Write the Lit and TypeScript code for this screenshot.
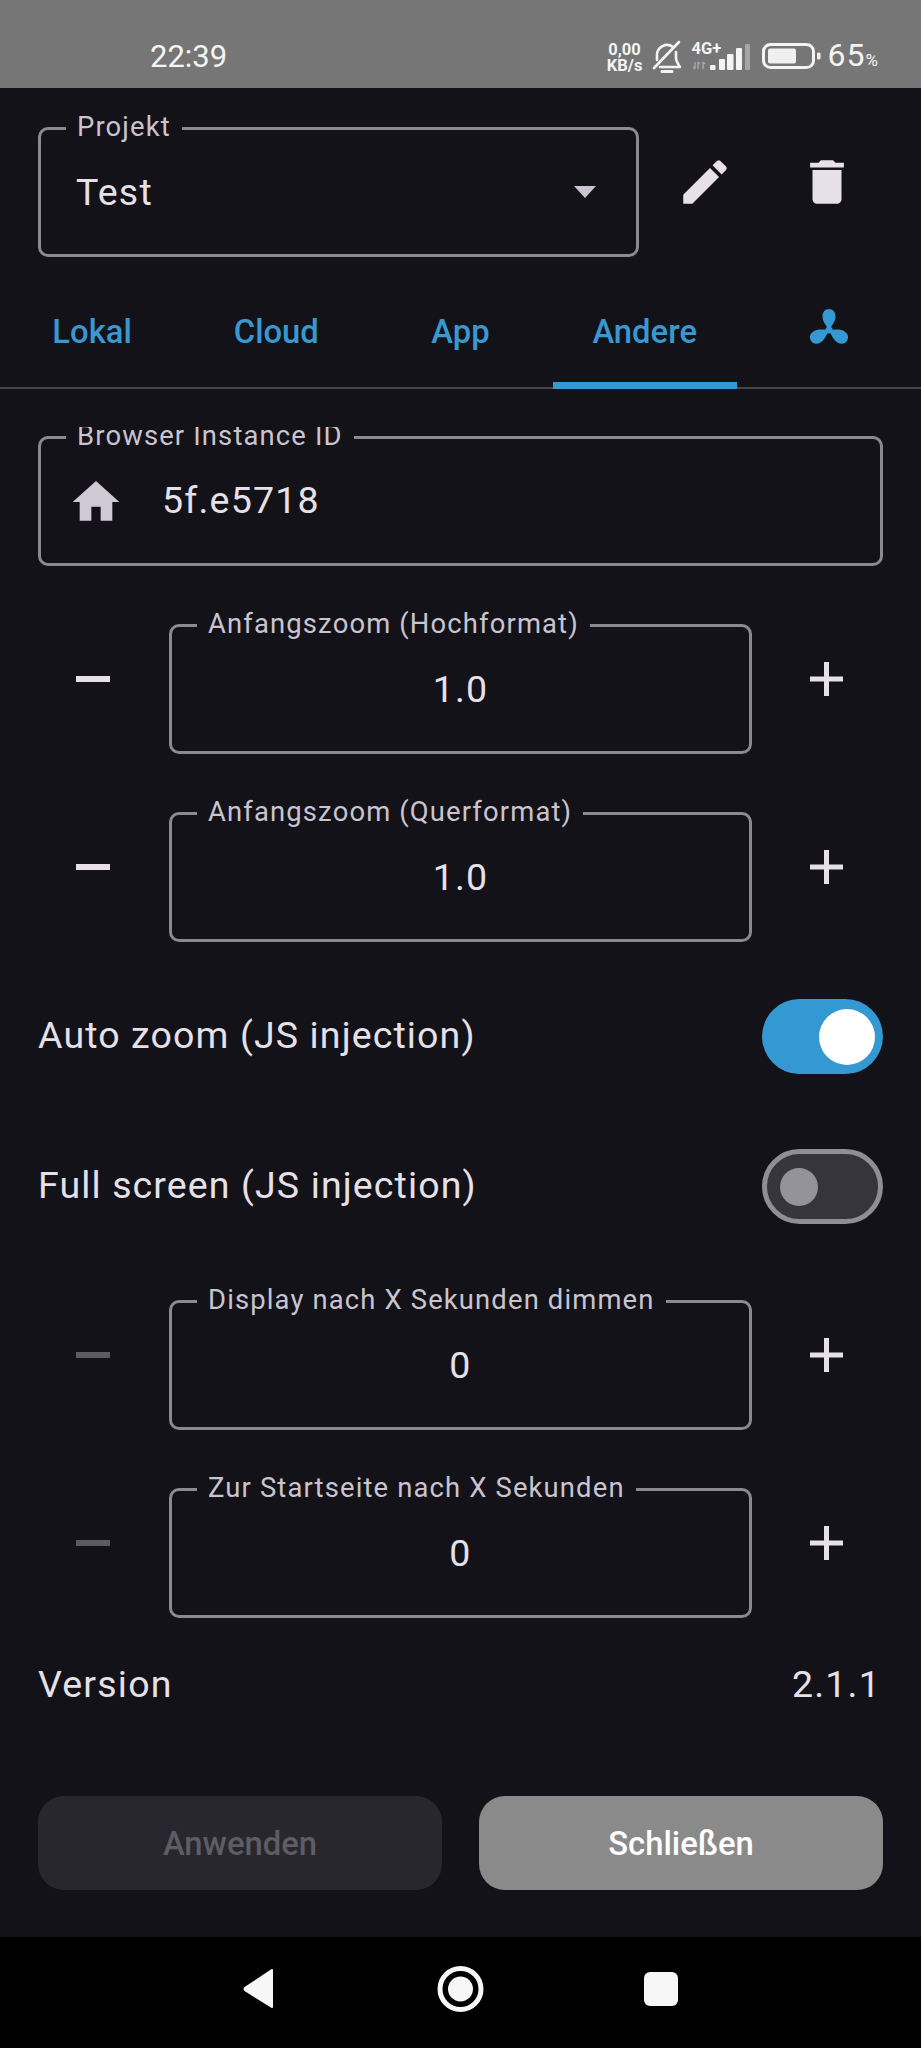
import { LitElement, html, css, svg } from "lit";
import { customElement } from "lit/decorators.js";

const ICON = {
  edit: svg`<path d="M3 17.25V21h3.75L17.81 9.94l-3.75-3.75L3 17.25zM20.71 7.04c.39-.39.39-1.02 0-1.41l-2.34-2.34c-.39-.39-1.02-.39-1.41 0l-1.83 1.83 3.75 3.75 1.83-1.83z"/>`,
  del: svg`<path d="M6 19c0 1.1.9 2 2 2h8c1.1 0 2-.9 2-2V7H6v12zM19 4h-3.5l-1-1h-5l-1 1H5v2h14V4z"/>`,
  home: svg`<path d="M10 20v-6h4v6h5v-8h3L12 3 2 12h3v8z"/>`,
};

const LOBE = "M21 22C19 17 14.5 13 14.5 7.5 14.5 3 17 0 21 0s6.500 3 6.500 7.500C27.500 13 23 17 21 22z";

@customElement("app-root")
export class AppRoot extends LitElement {
  static styles = css`
    :host { display: block; width: 921px; height: 2048px; font-family: Roboto, "Noto Sans", sans-serif; color: #e6e1e9; background: #131218; }
    * { box-sizing: border-box; }
    .page { display: flex; flex-direction: column; height: 2048px; overflow: hidden; }

    .status { height: 88px; flex: none; background: #767676; color: #f4f4f4; display: flex; align-items: center; padding: 26px 43px 0 150px; }
    .time { font-size: 31px; line-height: 36px; margin-top: -1px; }
    .sys { margin-left: auto; display: flex; align-items: center; }
    .speed { font-size: 16.5px; font-weight: 700; line-height: 16px; text-align: center; width: 36px; margin-top: 1px; }
    .bell { margin-left: 9px; display: block; }
    .net { position: relative; width: 60px; height: 30px; margin-left: 10px; }
    .net span { position: absolute; left: 0; top: -1px; font-size: 16.5px; font-weight: 700; line-height: 16px; }
    .net svg { position: absolute; left: 0; top: 0; }
    .batt { display: block; margin-left: 10px; margin-top: -3px; }
    .pct { font-size: 32px; line-height: 36px; margin-left: 6px; letter-spacing: 1px; }
    .pct small { font-size: 17px; letter-spacing: 0; }

    .main { flex: 1; min-height: 0; display: flex; flex-direction: column; }
    .top { display: flex; align-items: flex-start; padding: 39px 38px 0; flex: none; }
    .top .field { width: 601px; }
    .acts { display: flex; margin-left: 37px; }
    .acts svg { width: 58px; height: 58px; fill: #e6e1e9; display: block; margin-top: 26px; }
    .acts svg + svg { margin-left: 64px; }

    .field { position: relative; height: 130px; border: 3px solid #8b8a8f; border-radius: 10px; display: flex; align-items: center; }
    .lbl { position: absolute; left: 25px; top: -18px; padding: 0 11px; background: #131218; color: #cac4d0; font-size: 27.4px; line-height: 30px; letter-spacing: 1.15px; white-space: nowrap; }
    .val { font-size: 37.5px; letter-spacing: 1.2px; line-height: 48px; color: #e6e1e9; }
    .sel { padding: 0 40px 0 35px; justify-content: space-between; }
    .sel .val { margin-top: -1px; }
    .caret { width: 22px; height: 12px; fill: #cac4d0; display: block; }

    .tabs { display: grid; grid-template-columns: repeat(5, 1fr); height: 132px; flex: none; position: relative; border-bottom: 2px solid #46454b; }
    .tab { position: relative; display: flex; align-items: center; justify-content: center; color: #3998d0; font-size: 32.8px; font-weight: 500; padding-top: 19px; }
    .tab.on::after { content: ""; position: absolute; left: 0; right: 0; bottom: -2px; height: 7px; background: #3499d2; }
    .fan { width: 42px; height: 37px; fill: #3499d2; display: block; margin-top: -8px; }

    .scroll { flex: 1; min-height: 0; margin-top: 38px; padding: 9px 38px 0; overflow: hidden; display: flex; flex-direction: column; }
    .id { padding-left: 27px; flex: none; }
    .id svg { width: 56px; height: 56px; fill: #cfc9d6; display: block; margin-right: 38px; margin-top: 1px; }
    .id .val { position: relative; top: -1px; letter-spacing: 1.2px; }

    .num { display: flex; flex: none; margin-top: 58px; }
    .num .field { flex: 1; justify-content: center; }
    .step { width: 131px; flex: none; padding-top: 27px; height: 110px; display: flex; justify-content: center; }
    .step svg { width: 36px; height: 56px; display: block; stroke: #e6e1e9; stroke-width: 5px; }
    .step:first-child svg { stroke-width: 6px; }
    .step:first-child { justify-content: flex-start; padding-left: 38px; }
    .step:last-child { justify-content: flex-end; padding-right: 38px; }
    .step.off svg { stroke: #5c5b61; }

    .sw { display: flex; align-items: center; justify-content: space-between; height: 75px; flex: none; font-size: 37.5px; letter-spacing: 1.12px; margin-top: 57px; }
    .sw span { margin-top: -4px; }
    .sw + .sw { margin-top: 75px; }
    .sw + .num { margin-top: 76px; }
    .track { width: 121px; height: 75px; border-radius: 38px; display: flex; align-items: center; flex: none; }
    .track.on { background: #3499d2; justify-content: flex-end; padding-right: 8px; }
    .track.on i { width: 56px; height: 56px; border-radius: 50%; background: #fff; display: block; }
    .track.off { background: #36353b; border: 5px solid #8f8e93; padding-left: 13px; }
    .track.off i { width: 38px; height: 38px; border-radius: 50%; background: #95939a; display: block; }

    .ver { display: flex; justify-content: space-between; align-items: center; height: 50px; flex: none; margin-top: 41px; font-size: 37.5px; letter-spacing: 1.2px; padding-right: 2px; }

    .foot { flex: none; display: grid; grid-template-columns: 1fr 1fr; gap: 37px; padding: 0 38px 47px; }
    .btn { height: 94px; border-radius: 26px; display: flex; align-items: center; justify-content: center; font-size: 32.8px; font-weight: 500; padding-top: 2px; }
    .btn.dis { background: #28272d; color: #5e5c64; }
    .btn.go { background: #8a8a8a; color: #fff; }

    .nav { height: 111px; flex: none; background: #000; display: flex; justify-content: center; }
    .nav svg { display: block; width: 921px; height: 111px; }
  `;

  private field(label: string, value: unknown, cls = "") {
    return html`<div class="field ${cls}"><span class="lbl">${label}</span>${value}</div>`;
  }

  private num(label: string, value: string, off = false) {
    return html`<div class="num">
      <div class="step ${off ? "off" : ""}"><svg viewBox="0 0 36 56"><path d="M0 28h34"/></svg></div>
      ${this.field(label, html`<span class="val">${value}</span>`)}
      <div class="step"><svg viewBox="0 0 36 56"><path d="M1 28h33M17.500 11v34"/></svg></div>
    </div>`;
  }

  render() {
    return html`<div class="page">
      <div class="status">
        <span class="time">22:39</span>
        <div class="sys">
          <div class="speed">0,00<br />KB/s</div>
          <svg class="bell" width="30" height="34" viewBox="0 0 30 34" fill="none" stroke="#f4f4f4" stroke-width="2.6" stroke-linecap="round" stroke-linejoin="round">
            <path d="M5 20v-5a10 10 0 0 1 16-8M24 12v6c0 3 2 6 4 9H8"/>
            <path d="M27 2 2 28"/>
            <path d="M10 31.500h10" stroke-width="3"/>
          </svg>
          <div class="net">
            <span>4G+</span>
            <svg width="60" height="30" viewBox="0 0 60 30">
              <path d="M3 20v7M1 25l2 2M6 27v-7M8 22l-2-2M11 20v7M11 20l2 2" fill="none" stroke="#a8a8a8" stroke-width="1.4"/>
              <rect x="18" y="23" width="5.500" height="5" rx="1" fill="#f4f4f4"/>
              <rect x="27" y="17" width="6" height="11" rx="1" fill="#f4f4f4"/>
              <rect x="35" y="12" width="6.500" height="16" rx="1" fill="#f4f4f4"/>
              <rect x="44" y="6" width="6" height="22" rx="1" fill="#f4f4f4"/>
              <rect x="53" y="2" width="5" height="26" rx="1" fill="#a6a6a6"/>
            </svg>
          </div>
          <svg class="batt" width="60" height="26" viewBox="0 0 60 26">
            <rect x="1.500" y="1.500" width="50" height="23" rx="7" fill="none" stroke="#f4f4f4" stroke-width="3"/>
            <rect x="6" y="5.500" width="28" height="15" rx="2" fill="#f0f0f0"/>
            <rect x="55" y="9.500" width="3.500" height="7" rx="1.500" fill="#f4f4f4"/>
          </svg>
          <span class="pct">65<small>%</small></span>
        </div>
      </div>

      <div class="main">
        <div class="top">
          ${this.field("Projekt", html`<span class="val">Test</span><svg class="caret" viewBox="0 0 22 12"><path d="M0 0h22L11 12z"/></svg>`, "sel")}
          <div class="acts">
            <svg viewBox="0 0 24 24">${ICON.edit}</svg>
            <svg viewBox="0 0 24 24">${ICON.del}</svg>
          </div>
        </div>

        <div class="tabs">
          <div class="tab">Lokal</div>
          <div class="tab">Cloud</div>
          <div class="tab">App</div>
          <div class="tab on">Andere</div>
          <div class="tab">
            <svg class="fan" viewBox="0 0 42 37">
              <path d=${LOBE} />
              <path d=${LOBE} transform="rotate(120 21 21)" />
              <path d=${LOBE} transform="rotate(240 21 21)" />
              <circle cx="21" cy="21" r="3.500" />
            </svg>
          </div>
        </div>

        <div class="scroll">
          ${this.field("Browser Instance ID", html`<svg viewBox="0 0 24 24">${ICON.home}</svg><span class="val">5f.e5718</span>`, "id")}
          ${this.num("Anfangszoom (Hochformat)", "1.0")}
          ${this.num("Anfangszoom (Querformat)", "1.0")}
          <div class="sw"><span>Auto zoom (JS injection)</span><div class="track on"><i></i></div></div>
          <div class="sw"><span>Full screen (JS injection)</span><div class="track off"><i></i></div></div>
          ${this.num("Display nach X Sekunden dimmen", "0", true)}
          ${this.num("Zur Startseite nach X Sekunden", "0", true)}
          <div class="ver"><span>Version</span><span>2.1.1</span></div>
        </div>

        <div class="foot">
          <div class="btn dis">Anwenden</div>
          <div class="btn go">Schließen</div>
        </div>
      </div>

      <div class="nav">
        <svg viewBox="0 0 921 111">
          <path d="M273 33v37a1 1 0 0 1-1.700.7L244.500 54a3 3 0 0 1 0-4l26.800-17.700A1 1 0 0 1 273 33z" fill="#f7f7f7"/>
          <circle cx="460.500" cy="52" r="20.500" fill="none" stroke="#f7f7f7" stroke-width="5"/>
          <circle cx="460.500" cy="52" r="12.500" fill="#f7f7f7"/>
          <rect x="644" y="35" width="34" height="34" rx="6" fill="#f7f7f7"/>
        </svg>
      </div>
    </div>`;
  }
}
